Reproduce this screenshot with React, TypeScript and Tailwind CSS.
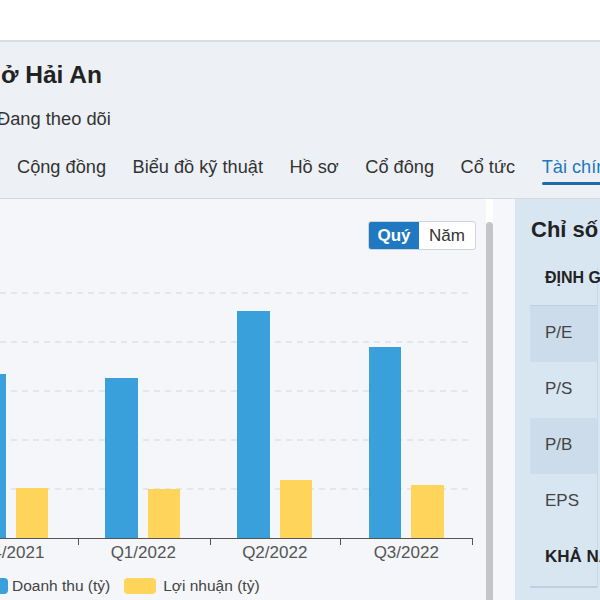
const tabs = ["Cộng đồng", "Biểu đồ kỹ thuật", "Hồ sơ", "Cổ đông", "Cổ tức"]

const bars = [
  { x: -26, top: 122, w: 32, c: "#3aa0dc" },
  { x: 16, top: 236, w: 32, c: "#ffd45a" },
  { x: 105, top: 126, w: 33, c: "#3aa0dc" },
  { x: 148, top: 237, w: 32, c: "#ffd45a" },
  { x: 237, top: 59, w: 33, c: "#3aa0dc" },
  { x: 280, top: 228, w: 32, c: "#ffd45a" },
  { x: 369, top: 95, w: 32, c: "#3aa0dc" },
  { x: 411, top: 233, w: 33, c: "#ffd45a" },
]

const labels = ["Q4/2021", "Q1/2022", "Q2/2022", "Q3/2022"]

function Chart() {
  return (
    <svg width="485" height="294" className="block">
      {[41, 90, 139, 188, 237].map((y) => (
        <line key={y} x1="0" x2="473" y1={y} y2={y} stroke="#d3d6da" strokeDasharray="6 5" />
      ))}
      {bars.map((b, i) => (
        <rect key={i} x={b.x} y={b.top} width={b.w} height={286 - b.top} fill={b.c} />
      ))}
      <line x1="0" x2="473" y1="286.5" y2="286.5" stroke="#555" />
      {[78, 210, 340, 472].map((x) => (
        <line key={x} x1={x + 0.5} x2={x + 0.5} y1="286" y2="293" stroke="#555" />
      ))}
    </svg>
  )
}

export default function App() {
  return (
    <div className="w-[600px] h-[600px] overflow-hidden bg-white font-['Liberation_Sans',Arial,sans-serif] text-[#333]">
      <div className="h-[40px] bg-white" />
      <header className="h-[158px] border-t-2 border-[#d8dde2] bg-[#edf1f5] overflow-hidden">
        <h1 className="mt-[18px] ml-[1px] text-[24.5px] font-bold text-[#222] whitespace-nowrap leading-[30px]">
          ở Hải An
        </h1>
        <div className="mt-[18px] ml-[-3px] text-[18.3px] text-[#333] leading-[22px] whitespace-nowrap">Đang theo dõi</div>
        <nav className="mt-[25px] flex items-start gap-[26.5px] pl-[17px] whitespace-nowrap text-[18.2px] leading-[24px]">
          {tabs.map((t) => (
            <span key={t} className="text-[#333]">
              {t}
            </span>
          ))}
          <span className="flex flex-col text-[#1f78c0]">
            Tài chính
            <span className="mt-[3px] h-[3px] rounded-full bg-[#1f6aa8]" />
          </span>
        </nav>
      </header>

      <main className="flex h-[402px] border-t border-[#d3d9df]">
        <section className="w-[486px] shrink-0 bg-[#f4f6f9] overflow-hidden">
          <div className="flex justify-end pr-[10px] pt-[22px]">
            <div className="flex h-[29px] rounded-[3px] border border-[#cfd4d9] bg-white text-[17px] overflow-hidden">
              <span className="flex items-center justify-center w-[50px] bg-[#1f78c0] font-bold text-white">Quý</span>
              <span className="flex items-center justify-center w-[56px] text-[#333]">Năm</span>
            </div>
          </div>
          <div className="mt-[2px]">
            <Chart />
          </div>
          <div className="flex ml-[-54px] text-[17px] text-[#555] leading-[16px] mt-[-1px]">
            {labels.map((l) => (
              <span key={l} className="w-[131.5px] shrink-0 text-center">
                {l}
              </span>
            ))}
          </div>
          <div className="flex items-center ml-[-24px] mt-[13px] text-[15.5px] text-[#444]">
            <span className="w-[32px] h-[16px] rounded-[4px] bg-[#3aa0dc]" />
            <span className="ml-[4px]">Doanh thu (tỷ)</span>
            <span className="ml-[14px] w-[32px] h-[16px] rounded-[4px] bg-[#ffd45a]" />
            <span className="ml-[7px]">Lợi nhuận (tỷ)</span>
          </div>
        </section>

        <div className="w-[7px] shrink-0 mt-[23px] rounded-t-[4px] bg-[#c3c5c8]" />
        <div className="w-[22px] shrink-0 bg-[#f5f7fa]" />

        <aside className="flex-1 bg-[#d8e6f2] overflow-hidden">
          <h2 className="mt-[18px] ml-[16px] text-[22px] font-bold text-[#222] whitespace-nowrap leading-[26px]">
            Chỉ số tài chính
          </h2>
          <div className="mt-[25px] ml-[15px] w-[68px] border-r border-[#c9d8e6]">
            <div className="h-[37px] pl-[15px] text-[16px] font-bold text-[#222] whitespace-nowrap leading-[20px]">
              ĐỊNH GIÁ
            </div>
            <div className="border-t border-[#bfcfdf]">
              {["P/E", "P/S", "P/B", "EPS"].map((r, i) => (
                <div
                  key={r}
                  className={`h-[56px] pb-[2px] flex items-center pl-[15px] text-[17px] text-[#444] ${
                    i % 2 === 0 ? "bg-[#cddcea]" : ""
                  }`}
                >
                  {r}
                </div>
              ))}
              <div className="h-[56px] pb-[2px] flex items-center pl-[15px] text-[17px] font-bold text-[#222] whitespace-nowrap">
                KHẢ NĂNG
              </div>
              <div className="border-t-2 border-[#bfcfdf]" />
            </div>
          </div>
        </aside>
      </main>
    </div>
  )
}
